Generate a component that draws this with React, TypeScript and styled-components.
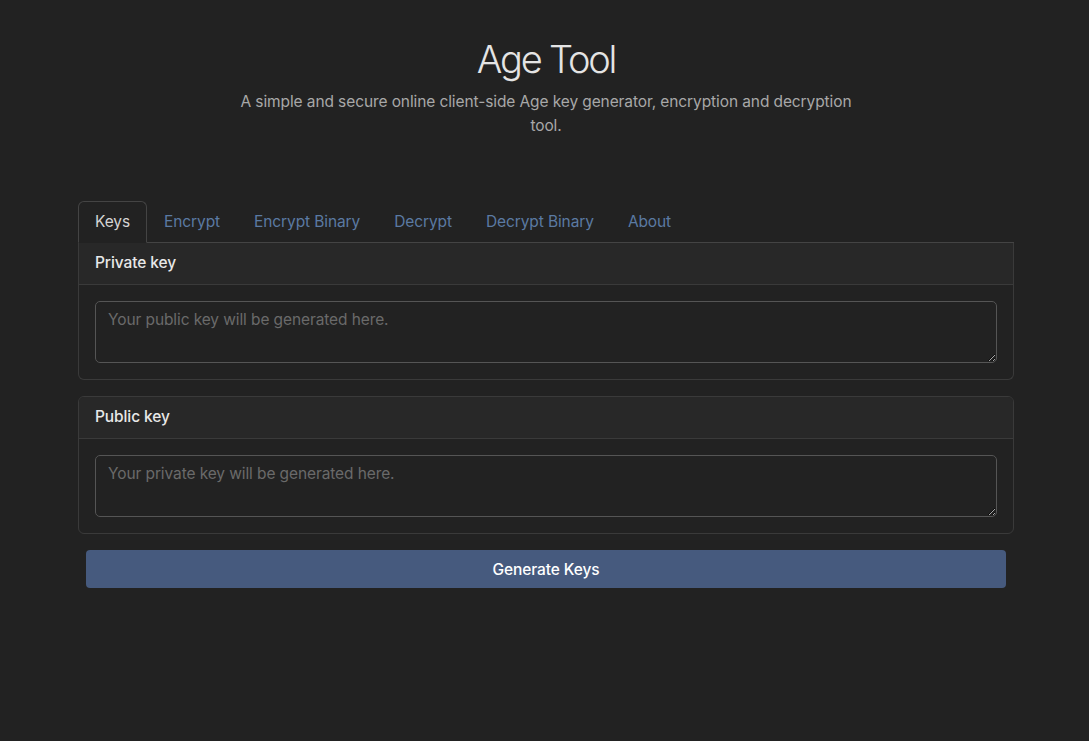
import React from "react";
import styled, { createGlobalStyle } from "styled-components";

const Global = createGlobalStyle`
  * { box-sizing: border-box; }
  html, body { margin: 0; padding: 0; background: #222222; }
  body {
    font-family: Inter, "Liberation Sans", Arial, sans-serif;
    color: #d6d6d6;
    font-size: 16px;
    line-height: 24px;
    min-height: 741px;
    padding-left: 3px;
  }
`;

const Container = styled.div`
  width: 936px;
  margin: 0 auto;
  padding-top: 36px;
`;

const Header = styled.header`
  display: flex;
  flex-direction: column;
  align-items: center;
  text-align: center;
`;

const Title = styled.h1`
  margin: 0 0 8px;
  font-size: 38px;
  line-height: 46px;
  font-weight: 300;
  letter-spacing: -2.2px;
  color: #e4e4e4;
`;

const Subtitle = styled.p`
  margin: 0;
  width: 630px;
  color: #a8a8a8;
  font-size: 15.5px;
  letter-spacing: -0.1px;
  line-height: 24px;
`;

const Tabs = styled.nav`
  display: flex;
  margin-top: 63px;
  border-bottom: 1px solid #444444;
`;

const Tab = styled.button<{ $active?: boolean }>`
  font: inherit;
  font-size: 15.5px;
  letter-spacing: -0.1px;
  line-height: 24px;
  padding: 8px 16px;
  margin-bottom: -1px;
  background: ${(p) => (p.$active ? "#222222" : "transparent")};
  color: ${(p) => (p.$active ? "#d4d4d4" : "#5b7aa2")};
  border: 1px solid ${(p) => (p.$active ? "#444444" : "transparent")};
  border-bottom-color: ${(p) => (p.$active ? "#222222" : "transparent")};
  border-radius: 6px 6px 0 0;
  cursor: pointer;
`;

const Panel = styled.section`
  display: flex;
  flex-direction: column;
  gap: 16px;
`;

const Card = styled.div<{ $first?: boolean }>`
  border: 1px solid #3a3a3a;
  border-top: ${(p) => (p.$first ? "none" : "1px solid #3a3a3a")};
  border-radius: ${(p) => (p.$first ? "0 0 6px 6px" : "6px")};
  overflow: hidden;
`;

const CardHeader = styled.div`
  background: #282828;
  padding: 8px 16px;
  font-weight: 500;
  font-size: 15.5px;
  letter-spacing: -0.1px;
  line-height: 24px;
  color: #e8e8e8;
  border-bottom: 1px solid #3a3a3a;
  height: 42px;
`;

const CardBody = styled.div`
  padding: 16px;
`;

const TextArea = styled.textarea`
  display: block;
  width: 100%;
  height: 62px;
  resize: vertical;
  background: #222222;
  border: 1px solid #555555;
  border-radius: 5px;
  padding: 6px 12px;
  font-family: Inter, "Liberation Sans", Arial, sans-serif;
  font-size: 15.5px;
  letter-spacing: -0.1px;
  line-height: 24px;
  color: #d6d6d6;
  outline: none;
  &::placeholder { color: #6a6a6a; }
`;

const ButtonRow = styled.div`
  padding: 0 8px;
`;

const PrimaryButton = styled.button`
  width: 100%;
  height: 38px;
  background: #465a7e;
  border: none;
  border-radius: 4px;
  color: #ffffff;
  font-family: Inter, "Liberation Sans", Arial, sans-serif;
  font-weight: 500;
  font-size: 15.5px;
  letter-spacing: -0.1px;
  cursor: pointer;
`;

const tabs = ["Keys", "Encrypt", "Encrypt Binary", "Decrypt", "Decrypt Binary", "About"];

export default function App() {
  return (
    <>
      <Global />
      <Container>
        <Header>
          <Title>Age Tool</Title>
          <Subtitle>
            A simple and secure online client-side Age key generator, encryption and decryption tool.
          </Subtitle>
        </Header>
        <Tabs>
          {tabs.map((t, i) => (
            <Tab key={t} $active={i === 0}>
              {t}
            </Tab>
          ))}
        </Tabs>
        <Panel>
          <Card $first>
            <CardHeader>Private key</CardHeader>
            <CardBody>
              <TextArea placeholder="Your public key will be generated here." />
            </CardBody>
          </Card>
          <Card>
            <CardHeader>Public key</CardHeader>
            <CardBody>
              <TextArea placeholder="Your private key will be generated here." />
            </CardBody>
          </Card>
          <ButtonRow>
            <PrimaryButton>Generate Keys</PrimaryButton>
          </ButtonRow>
        </Panel>
      </Container>
    </>
  );
}
